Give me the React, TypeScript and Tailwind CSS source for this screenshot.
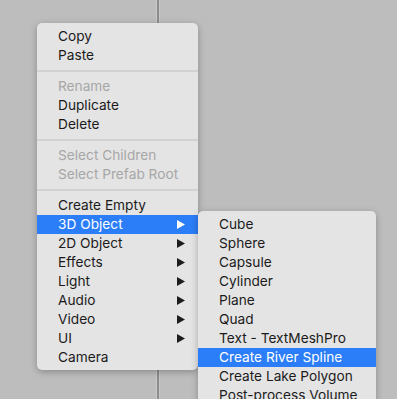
import React from "react";

type Item =
  | { sep: true }
  | { label: string; disabled?: boolean; arrow?: boolean; active?: boolean };

const mainItems: Item[] = [
  { label: "Copy" },
  { label: "Paste" },
  { sep: true },
  { label: "Rename", disabled: true },
  { label: "Duplicate" },
  { label: "Delete" },
  { sep: true },
  { label: "Select Children", disabled: true },
  { label: "Select Prefab Root", disabled: true },
  { sep: true },
  { label: "Create Empty" },
  { label: "3D Object", arrow: true, active: true },
  { label: "2D Object", arrow: true },
  { label: "Effects", arrow: true },
  { label: "Light", arrow: true },
  { label: "Audio", arrow: true },
  { label: "Video", arrow: true },
  { label: "UI", arrow: true },
  { label: "Camera" },
];

const subItems: Item[] = [
  { label: "Cube" },
  { label: "Sphere" },
  { label: "Capsule" },
  { label: "Cylinder" },
  { label: "Plane" },
  { label: "Quad" },
  { label: "Text - TextMeshPro" },
  { label: "Create River Spline", active: true },
  { label: "Create Lake Polygon" },
  { label: "Post-process Volume" },
];

function Arrow({ white }: { white?: boolean }) {
  return (
    <svg width="8" height="9" viewBox="0 0 8 9" className="shrink-0">
      <polygon points="0,0 8,4.5 0,9" fill={white ? "#ffffff" : "#1c1c1c"} />
    </svg>
  );
}

function Row({ item }: { item: Item }) {
  if ("sep" in item) {
    return (
      <div className="pt-[5px] pb-[5px]">
        <div className="h-[2px] bg-[#d2d2d2]" />
      </div>
    );
  }
  const cls = item.active
    ? "bg-[#2b7ef7] text-white"
    : item.disabled
    ? "text-[#a7a7a7]"
    : "text-[#1b1b1b]";
  return (
    <div className={`flex h-[19px] items-center justify-between pl-[21px] pr-[13px] ${cls}`}>
      <span className="whitespace-nowrap leading-none">{item.label}</span>
      {item.arrow && <Arrow white={item.active} />}
    </div>
  );
}

export default function App() {
  return (
    <div
      className="relative h-[399px] w-[397px] overflow-hidden bg-[#bdbdbd] text-[13.7px]"
      style={{ fontFamily: "Inter, 'Liberation Sans', sans-serif" }}
    >
      <div className="absolute left-[156px] top-0 flex h-full">
        <div className="w-[1px] bg-[#c9c9c9]" />
        <div className="w-[2px] bg-[#8d8d8d]" />
        <div className="w-[1px] bg-[#c6c6c6]" />
      </div>

      <div className="absolute left-[37px] top-[23px] flex h-[347px] w-[161px] flex-col rounded-[5px] bg-[#e4e4e4] pt-[4px] shadow-[0_2px_7px_rgba(0,0,0,0.28)]">
        {mainItems.map((it, i) => (
          <Row key={i} item={it} />
        ))}
      </div>

      <div className="absolute left-[198px] top-[211px] flex w-[178px] flex-col rounded-t-[5px] bg-[#e4e4e4] pt-[4px] pb-[4px] shadow-[0_2px_7px_rgba(0,0,0,0.28)]">
        {subItems.map((it, i) => (
          <Row key={i} item={it} />
        ))}
      </div>
    </div>
  );
}
